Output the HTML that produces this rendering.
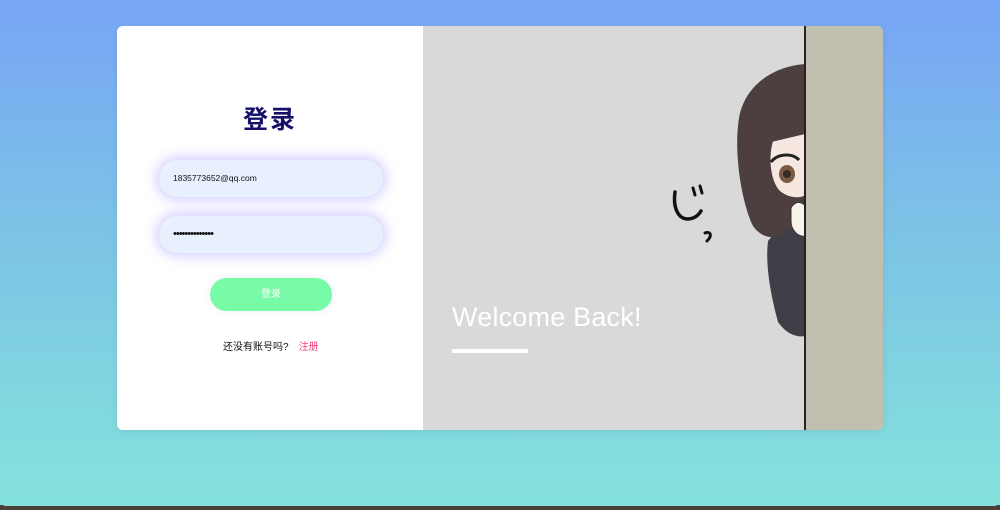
<!DOCTYPE html>
<html><head><meta charset="utf-8"><style>
*{margin:0;padding:0;box-sizing:border-box}
body{width:1000px;height:510px;overflow:hidden;position:relative;background:linear-gradient(180deg,#78a5f6 0%,#7cc3e6 45%,#84e2dc 100%);font-family:"Liberation Sans","Noto Sans CJK SC",sans-serif}
.strip{position:absolute;left:0;right:0;top:505px;height:5px;background:#4a4038}
.bg{position:absolute;left:0;top:0;width:1000px;height:506px;border-radius:0 0 6px 6px;background:linear-gradient(180deg,#78a5f6 0%,#7cc3e6 45%,#84e2dc 100%)}
.card{position:absolute;left:117px;top:26px;width:766px;height:404px;border-radius:6px;overflow:hidden;background:#fff;box-shadow:0 2px 8px rgba(0,0,0,.08)}
.left{position:absolute;left:0;top:0;width:306px;height:404px;background:#fff}
h1{position:absolute;left:0;width:306px;top:74px;text-align:center;font-size:25px;color:#16106a;font-weight:bold;letter-spacing:2px}
.in{position:absolute;left:42px;width:224px;height:37px;border-radius:19px;background:#e8effd;box-shadow:0 0 12px 3px rgba(140,130,255,.4);font-size:8.5px;color:#111;padding-left:14px;line-height:37px}
.btn{position:absolute;left:93px;top:252px;width:122px;height:33px;border-radius:17px;background:#77fba6;color:#fff;text-align:center;line-height:33px;font-size:10px;box-shadow:0 0 8px rgba(160,160,255,.2)}
.reg{position:absolute;top:312px;left:106px;font-size:10px;color:#111}
.reg span{color:#f0407a;margin-left:10px}
.right{position:absolute;left:306px;top:0;width:460px;height:404px;background:#d9d9d9}
.wall{position:absolute;left:381px;top:0;width:79px;height:404px;background:#c0bfb0;border-left:2px solid #2a2222}
.wb{position:absolute;left:29px;top:276px;font-size:27px;color:#fff;letter-spacing:.2px}
.ul{position:absolute;left:29px;top:323px;width:76px;height:4px;background:#fff}
</style></head><body>
<div class="strip"></div><div class="bg"></div>
<div class="card">
<div class="left">
<h1>登录</h1>
<div class="in" style="top:134px">1835773652@qq.com</div>
<div class="in" style="top:190px;font-size:11px;letter-spacing:-1px">••••••••••••••</div>
<div class="btn">登录</div>
<div class="reg">还没有账号吗?<span>注册</span></div>
</div>
<div class="right">
<svg style="position:absolute;left:0;top:0" width="460" height="404">
<path d="M252 166 C250 180 254 192 264 193 C270 193 275 190 278 185" stroke="#111" stroke-width="3.5" fill="none" stroke-linecap="round"/>
<path d="M270 162 l2 7 M277 160 l2 7" stroke="#111" stroke-width="3" stroke-linecap="round"/>
<path d="M282 207 c5 -2 8 2 2 8" stroke="#111" stroke-width="3" fill="none" stroke-linecap="round"/>
<path d="M382 150 L382 310 C372 312 362 306 355 296 C348 270 342 240 345 215 L370 185 Z" fill="#3f3f48"/>
<path d="M382 38 C352 40 322 58 316 92 C310 130 320 180 330 200 C340 214 355 214 362 205 L382 198 Z" fill="#4d3f3f"/>
<path d="M382 100 L352 110 C345 125 346 152 356 164 C366 174 382 172 382 168 Z" fill="#f6e8e0"/>
<path d="M340 118 L382 108 L382 88 L344 98 Z" fill="#4d3f3f"/>
<ellipse cx="364" cy="148" rx="8" ry="9" fill="#7a5a45"/><circle cx="364" cy="148" r="4" fill="#3a2a22"/>
<path d="M348 136 C355 127 370 127 376 134" stroke="#222" stroke-width="3" fill="none"/>
<path d="M368 182 C372 174 382 174 384 186 L384 210 C376 212 368 205 368 195 Z" fill="#f8f2ea" stroke="#333" stroke-width="1"/>
</svg>
<div class="wall"></div>
<div class="wb">Welcome Back!</div>
<div class="ul"></div>
</div>
</div>
</body></html>
